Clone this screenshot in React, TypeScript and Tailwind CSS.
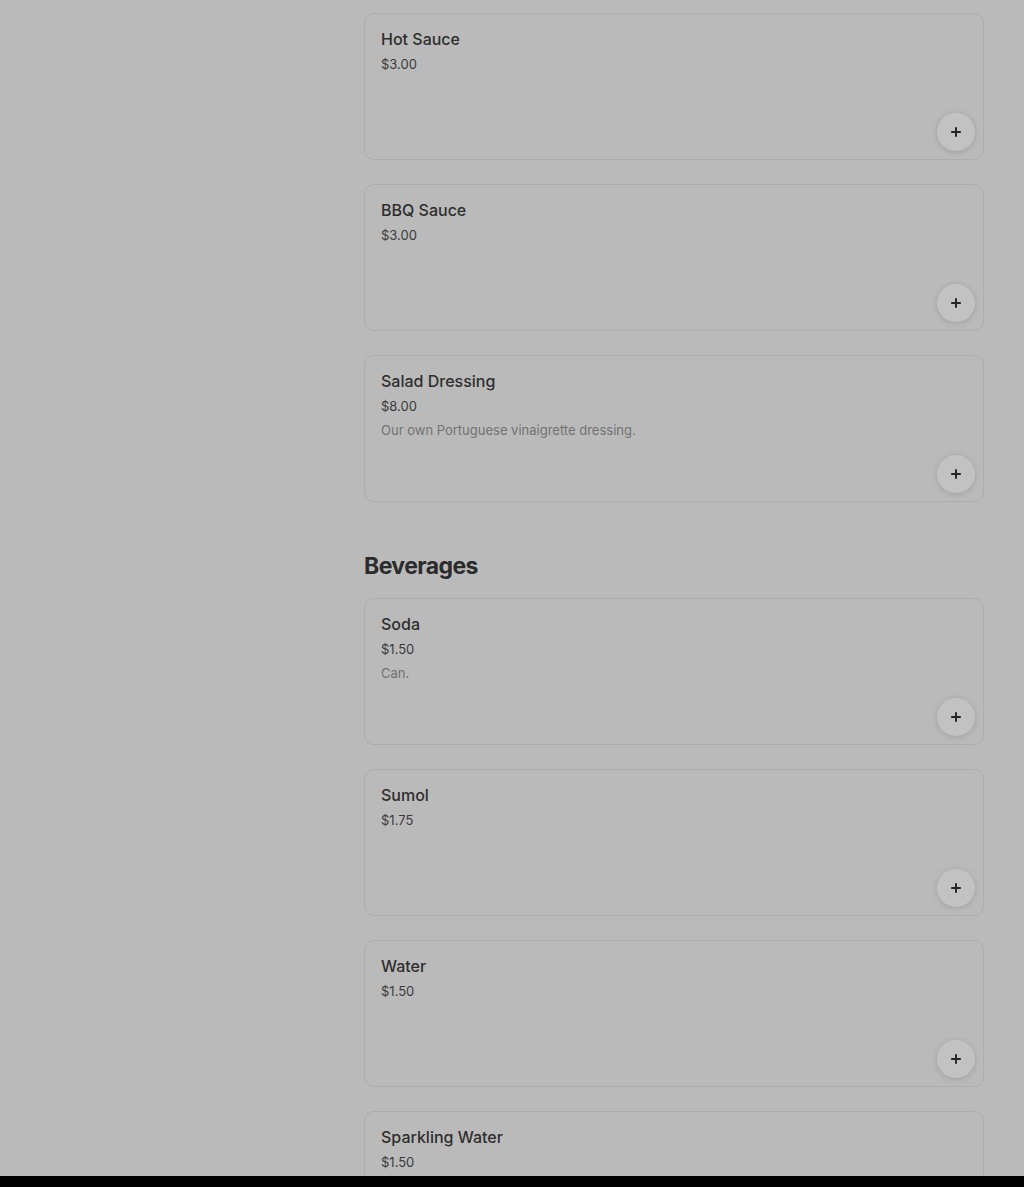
import { Plus } from "lucide-react";

type Item = { name: string; price: string; description?: string };

const sauces: Item[] = [
  { name: "Hot Sauce", price: "$3.00" },
  { name: "BBQ Sauce", price: "$3.00" },
  { name: "Salad Dressing", price: "$8.00", description: "Our own Portuguese vinaigrette dressing." },
];

const beverages: Item[] = [
  { name: "Soda", price: "$1.50", description: "Can." },
  { name: "Sumol", price: "$1.75" },
  { name: "Water", price: "$1.50" },
  { name: "Sparkling Water", price: "$1.50" },
];

function ItemCard({ item }: { item: Item }) {
  return (
    <div className="flex h-[147px] shrink-0 flex-col rounded-[10px] border border-[#adadad] px-4 pt-[15px] pb-4">
      <div className="text-base leading-5 font-medium text-[#2e2e2e]">{item.name}</div>
      <div className="mt-[6px] text-[13px] leading-[18px] text-[#3a3a3a]">{item.price}</div>
      {item.description && (
        <div className="mt-[6px] text-[13px] leading-[18px] text-[#727272]">{item.description}</div>
      )}
      <button className="-mr-2 -mb-2 mt-auto flex h-[38px] w-[38px] items-center justify-center self-end rounded-full bg-[#c2c2c2] shadow-[0_1px_6px_rgba(0,0,0,0.15)]">
        <Plus size={14} strokeWidth={3.4} className="text-[#262626]" />
      </button>
    </div>
  );
}

export default function App() {
  return (
    <div className="h-[1187px] overflow-hidden bg-[#bababa] font-['Inter',sans-serif]">
      <div className="flex gap-6 pt-[13px]">
        <aside className="w-[340px] shrink-0" />
        <main className="w-[620px]">
          <div className="flex flex-col gap-6">
            {sauces.map((item) => (
              <ItemCard key={item.name} item={item} />
            ))}
          </div>
          <h2 className="mt-12 mb-4 text-[23px] leading-8 font-bold tracking-tight text-[#2b2b2b]">Beverages</h2>
          <div className="flex flex-col gap-6">
            {beverages.map((item) => (
              <ItemCard key={item.name} item={item} />
            ))}
          </div>
        </main>
      </div>
      <div className="fixed inset-x-0 bottom-0 h-[11px] bg-black" />
    </div>
  );
}
